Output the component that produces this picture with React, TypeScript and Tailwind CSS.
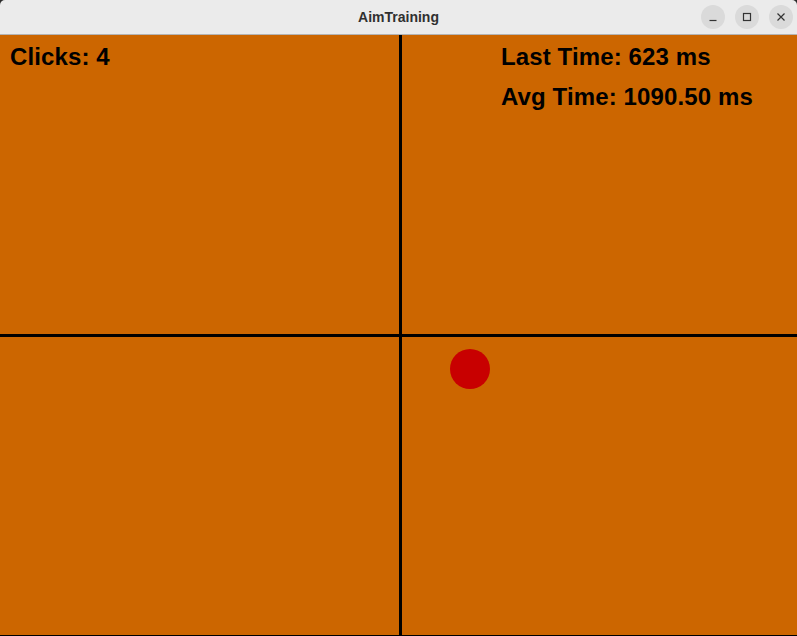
import React from 'react';

const ORANGE = 'bg-[#cc6600]';

const TitleButton: React.FC<{ kind: 'min' | 'max' | 'close' }> = ({ kind }) => (
  <div className="w-[24px] h-[24px] rounded-full bg-[#dadada] flex items-center justify-center">
    <svg width="10" height="10" viewBox="0 0 10 10" fill="none" stroke="#333" strokeWidth="1.2">
      {kind === 'min' && <path d="M1.5 8.5h7" />}
      {kind === 'max' && <rect x="1.5" y="1.5" width="7" height="7" />}
      {kind === 'close' && <path d="M1.5 1.5l7 7M8.5 1.5l-7 7" />}
    </svg>
  </div>
);

export default function App() {
  const clicks = 4;
  const lastTime = 623;
  const avgTime = 1090.5;

  return (
    <div className="w-[797px] h-[636px] bg-[#2b2b2b] overflow-hidden" style={{ fontFamily: '"Liberation Sans", Arial, sans-serif' }}>
      {/* Window title bar */}
      <div className="relative h-[35px] bg-[#ebebeb] border-b border-[#b4b4b4] rounded-t-[5px] flex items-center justify-center">
        <span className="text-[14px] font-bold text-[#303030]">AimTraining</span>
        <div className="absolute right-[4px] top-[5px] flex gap-[10px]">
          <TitleButton kind="min" />
          <TitleButton kind="max" />
          <TitleButton kind="close" />
        </div>
      </div>

      {/* Game panel: four quadrants split by black lines */}
      <div className="h-[601px] bg-black grid grid-cols-[399px_395px] grid-rows-[299px_298px] gap-[3px] text-black font-bold text-[24px] leading-[40px] tracking-[0.12px]">
        <div className={`${ORANGE} pl-[10px] pt-[2px]`}>Clicks: {clicks}</div>
        <div className={`${ORANGE} pl-[99px] pt-[2px]`}>
          <div>Last Time: {lastTime} ms</div>
          <div>Avg Time: {avgTime.toFixed(2)} ms</div>
        </div>
        <div className={ORANGE}></div>
        <div className={`${ORANGE} relative`}>
          {/* target */}
          <div className="absolute left-[48px] top-[12px] w-[40px] h-[40px] rounded-full bg-[#c80000]"></div>
        </div>
      </div>
    </div>
  );
}
